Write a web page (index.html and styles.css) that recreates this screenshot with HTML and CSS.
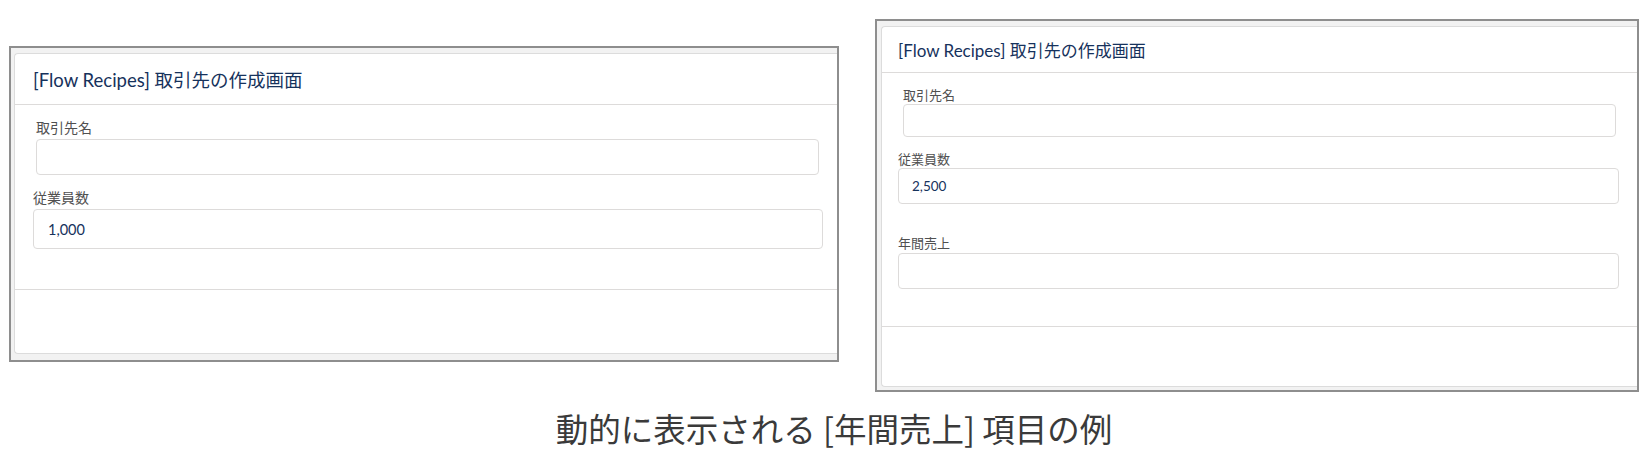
FILE: index.html
```html
<!DOCTYPE html>
<html lang="ja">
<head>
<meta charset="utf-8">
<title>Flow Recipes</title>
<link rel="stylesheet" href="styles.css">
</head>
<body>
<div class="page">
  <div class="shots">
    <div class="frame frame-a">
      <div class="card">
        <div class="card-header"><span class="title">[Flow Recipes] 取引先の作成画面</span></div>
        <div class="card-body">
          <div class="field f1">
            <div class="label">取引先名</div>
            <div class="input"></div>
          </div>
          <div class="field f2">
            <div class="label">従業員数</div>
            <div class="input"><span class="value">1,000</span></div>
          </div>
        </div>
        <div class="card-footer"></div>
      </div>
    </div>
    <div class="frame frame-b">
      <div class="card">
        <div class="card-header"><span class="title">[Flow Recipes] 取引先の作成画面</span></div>
        <div class="card-body">
          <div class="field f1">
            <div class="label">取引先名</div>
            <div class="input"></div>
          </div>
          <div class="field f2">
            <div class="label">従業員数</div>
            <div class="input"><span class="value">2,500</span></div>
          </div>
          <div class="field f3">
            <div class="label">年間売上</div>
            <div class="input"></div>
          </div>
        </div>
        <div class="card-footer"></div>
      </div>
    </div>
  </div>
  <div class="caption">動的に表示される [年間売上] 項目の例</div>
</div>
</body>
</html>
```
FILE: styles.css
```css
html, body {
  margin: 0;
  padding: 0;
  background: #ffffff;
}
body {
  font-family: "Lato", "Noto Sans CJK JP", sans-serif;
  width: 1648px;
  height: 456px;
  overflow: hidden;
}
.page {
  width: 1648px;
}
.shots {
  display: flex;
  align-items: flex-start;
  padding-left: 9px;
  gap: 36px;
}
.frame {
  box-sizing: border-box;
  border: 2px solid #8e8e8e;
  background: #f2f2f2;
  display: flex;
}
.card {
  flex: 1;
  box-sizing: border-box;
  background: #ffffff;
  border: 1px solid #dcdcdc;
  border-right: none;
  border-radius: 4px 0 0 4px;
  display: flex;
  flex-direction: column;
}
.card-header {
  display: flex;
  align-items: center;
  border-bottom: 1px solid #dddbda;
}
.title {
  color: #16325c;
  white-space: nowrap;
}
.card-body {
  display: flex;
  flex-direction: column;
  border-bottom: 1px solid #dddbda;
}
.label {
  color: #505050;
  white-space: nowrap;
}
.input {
  box-sizing: border-box;
  border: 1px solid #dddbda;
  border-radius: 4px;
  background: #ffffff;
  display: flex;
  align-items: center;
}
.value {
  color: #16325c;
}

/* left screenshot */
.frame-a {
  width: 830px;
  margin-top: 46px;
  padding: 5px 0 6px 3px;
}
.frame-a .card-header {
  height: 50px;
  padding-left: 18px;
}
.frame-a .title {
  font-size: 18.5px;
}
.frame-a .card-body {
  padding: 14px 0 40px 18px;
}
.frame-a .label {
  font-size: 14px;
  line-height: 18px;
  margin-bottom: 2px;
}
.frame-a .f1 {
  margin: 0 18px 0 3px;
}
.frame-a .f1 .input {
  height: 36px;
}
.frame-a .f2 {
  margin: 14px 14px 0 0;
}
.frame-a .f2 .input {
  height: 40px;
  padding-left: 14px;
}
.frame-a .value {
  font-size: 14.5px;
}
.frame-a .card-footer {
  height: 63px;
}

/* right screenshot */
.frame-b {
  width: 764px;
  margin-top: 19px;
  padding: 5px 0 3px 4px;
}
.frame-b .card-header {
  height: 45px;
  padding-left: 16px;
}
.frame-b .title {
  font-size: 17px;
}
.frame-b .card-body {
  padding: 14px 0 37px 16px;
}
.frame-b .label {
  font-size: 13px;
  line-height: 16px;
}
.frame-b .f1 {
  margin: 0 21px 0 5px;
}
.frame-b .f1 .label {
  margin-bottom: 1px;
}
.frame-b .f1 .input {
  height: 33px;
}
.frame-b .f2 {
  margin: 14px 18px 0 0;
}
.frame-b .f2 .label {
  margin-bottom: 1px;
}
.frame-b .f2 .input {
  height: 36px;
  padding-left: 13px;
}
.frame-b .f3 {
  margin: 31px 18px 0 0;
}
.frame-b .f3 .label {
  margin-bottom: 2px;
}
.frame-b .f3 .input {
  height: 36px;
}
.frame-b .value {
  font-size: 13.5px;
}
.frame-b .card-footer {
  height: 59px;
}

.caption {
  margin-top: 16px;
  padding-left: 20px;
  text-align: center;
  font-family: "Noto Sans CJK JP", sans-serif;
  font-size: 32.5px;
  line-height: 40px;
  color: #3a3a3a;
  white-space: nowrap;
}
```
